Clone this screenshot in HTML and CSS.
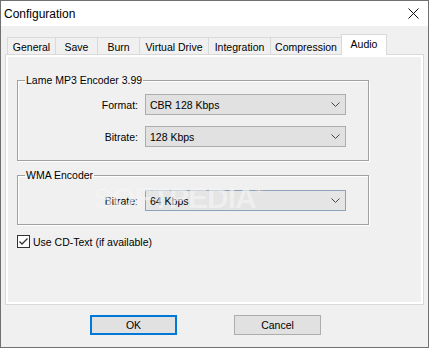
FILE: index.html
```html
<!DOCTYPE html>
<html>
<head>
<meta charset="utf-8">
<link rel="stylesheet" href="styles.css">
</head>
<body>
<div class="window">
  <div class="titlebar">
    <span class="title">Configuration</span>
    <svg class="close" width="11" height="11" viewBox="0 0 11 11"><path d="M0.5 0.5L10.5 10.5M10.5 0.5L0.5 10.5" stroke="#111" stroke-width="1" fill="none"/></svg>
  </div>
  <div class="tabs">
    <div class="tab t-general">General</div>
    <div class="tab t-save">Save</div>
    <div class="tab t-burn">Burn</div>
    <div class="tab t-vd">Virtual Drive</div>
    <div class="tab t-int">Integration</div>
    <div class="tab t-comp">Compression</div>
    <div class="tab active t-audio">Audio</div>
  </div>
  <div class="panel">
    <div class="page">
      <fieldset class="group g1">
        <legend>Lame MP3 Encoder 3.99</legend>
        <div class="row">
          <span class="lbl">Format:</span>
          <div class="combo"><span>CBR 128 Kbps</span><svg class="chev" width="9" height="5" viewBox="0 0 9 5"><path d="M0.5 0.5L4.5 4.5L8.5 0.5" stroke="#444" fill="none"/></svg></div>
        </div>
        <div class="row">
          <span class="lbl">Bitrate:</span>
          <div class="combo"><span>128 Kbps</span><svg class="chev" width="9" height="5" viewBox="0 0 9 5"><path d="M0.5 0.5L4.5 4.5L8.5 0.5" stroke="#444" fill="none"/></svg></div>
        </div>
      </fieldset>
      <fieldset class="group g2">
        <legend>WMA Encoder</legend>
        <div class="row">
          <span class="lbl">Bitrate:</span>
          <div class="combo focus"><span>64 Kbps</span><svg class="chev" width="9" height="5" viewBox="0 0 9 5"><path d="M0.5 0.5L4.5 4.5L8.5 0.5" stroke="#444" fill="none"/></svg></div>
        </div>
      </fieldset>
      <div class="check">
        <svg class="cbox" width="13" height="13" viewBox="0 0 13 13"><rect x="0.5" y="0.5" width="12" height="12" fill="#fff" stroke="#333"/><path d="M2.5 6.5L5 9L10.5 3.5" stroke="#333" stroke-width="1.3" fill="none"/></svg>
        <span>Use CD-Text (if available)</span>
      </div>
    </div>
  </div>
  <div class="buttons">
    <div class="btn default">OK</div>
    <div class="btn">Cancel</div>
  </div>
  <div class="watermark">SOFTPEDIA<sup>®</sup></div>
</div>
</body>
</html>
```
FILE: styles.css
```css
* { box-sizing: border-box; }
body {
  margin: 0;
  font-family: "Liberation Sans", Arial, sans-serif;
  font-size: 10.5px;
  color: #000;
}
.window {
  width: 429px;
  height: 348px;
  border: 1px solid #707070;
  background: #f0f0f0;
  display: flex;
  flex-direction: column;
  position: relative;
  overflow: hidden;
}
.titlebar {
  height: 25px;
  background: #fff;
  display: flex;
  align-items: center;
  justify-content: space-between;
  padding: 0 9px 0 3px;
  flex: none;
}
.title { font-size: 12px; }
.close { display: block; }
.tabs {
  height: 28px;
  display: flex;
  align-items: flex-end;
  padding-left: 6px;
  flex: none;
}
.tab {
  height: 17px;
  border: 1px solid #d9d9d9;
  border-bottom: none;
  background: #f0f0f0;
  display: flex;
  align-items: center;
  justify-content: center;
  margin-left: -1px;
  padding-top: 1px;
}
.tab:first-child { margin-left: 0; }
.t-general { width: 49px; }
.t-save { width: 43px; }
.t-burn { width: 43px; }
.t-vd { width: 70px; }
.t-int { width: 63px; }
.t-comp { width: 72px; }
.t-audio { width: 46px; }
.tab.active {
  height: 21px;
  margin-bottom: -1px;
  background: #fff;
  position: relative;
  z-index: 1;
  align-items: flex-start;
  padding-top: 3px;
}
.panel {
  margin-left: 4px;
  width: 419px;
  height: 251px;
  border: 1px solid #d9d9d9;
  background: #fff;
  padding: 2px;
  flex: none;
}
.page {
  height: 100%;
  background: #f0f0f0;
  padding: 0 0 0 9px;
  display: flex;
  flex-direction: column;
}
.group {
  margin: 0;
  width: 352px;
  border: 1px solid #a0a0a0;
  box-shadow: inset 1px 1px 0 #fff, 1px 1px 0 #fff;
  padding: 0;
  min-inline-size: 0;
}
.group legend {
  margin-left: 7px;
  padding: 0 1px;
  line-height: 13px;
}
.g1 { margin-top: 17px; padding: 7px 0 13px; }
.g2 { margin-top: 8px; padding: 8px 0 13px; }
.row {
  display: flex;
  align-items: center;
}
.row + .row { margin-top: 11px; }
.lbl {
  width: 120px;
  text-align: right;
  margin-right: 7px;
}
.combo {
  width: 201px;
  height: 21px;
  border: 1px solid #adadad;
  background: #e1e1e1;
  display: flex;
  align-items: center;
  justify-content: space-between;
  padding: 0 5px 0 4px;
}
.combo.focus {
  border-color: #8ba3bb;
  background: #e5e5e5;
}
.chev { display: block; }
.check {
  margin-top: 10px;
  display: flex;
  align-items: center;
  margin-left: 0;
}
.cbox { display: block; margin-right: 3px; }
.buttons {
  display: flex;
  padding: 10px 0 0 89px;
  gap: 57px;
}
.btn {
  width: 87px;
  height: 20px;
  border: 1px solid #adadad;
  background: #e1e1e1;
  display: flex;
  align-items: center;
  justify-content: center;
}
.btn.default { border: 2px solid #0078d7; }
.watermark {
  position: absolute;
  left: 92px;
  top: 180px;
  font-family: "Liberation Sans", Arial, sans-serif;
  font-weight: bold;
  font-size: 30px;
  letter-spacing: -1px;
  color: rgba(255, 255, 255, 0.6);
  text-shadow: 0 0 1px rgba(0, 0, 0, 0.06);
  pointer-events: none;
}
.watermark sup { font-size: 9px; vertical-align: 14px; }
```
